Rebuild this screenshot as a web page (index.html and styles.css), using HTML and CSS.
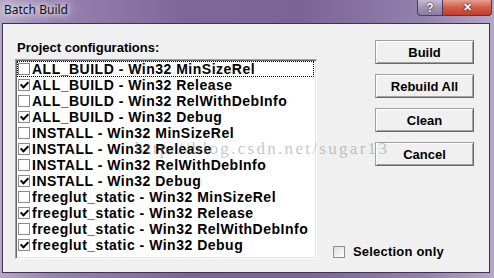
FILE: index.html
```html
<!DOCTYPE html>
<html lang="en">
<head>
    <meta charset="UTF-8">
    <title>Batch Build</title>
    <link rel="stylesheet" href="styles.css">
</head>
<body>
    <div class="window">
        <div class="titlebar">
            <span class="title">Batch Build</span>
            <div class="caps">
                <span class="cap help">?</span>
                <span class="cap close">&#x2715;</span>
            </div>
        </div>

        <div class="client">
            <div class="configs">
                <div class="label">Project configurations:</div>
                <ul class="list">
                    <li class="item focus"><span class="check"></span>ALL_BUILD - Win32 MinSizeRel</li>
                    <li class="item"><span class="check on"></span>ALL_BUILD - Win32 Release</li>
                    <li class="item"><span class="check"></span>ALL_BUILD - Win32 RelWithDebInfo</li>
                    <li class="item"><span class="check on"></span>ALL_BUILD - Win32 Debug</li>
                    <li class="item"><span class="check"></span>INSTALL - Win32 MinSizeRel</li>
                    <li class="item"><span class="check on"></span>INSTALL - Win32 Release</li>
                    <li class="item"><span class="check"></span>INSTALL - Win32 RelWithDebInfo</li>
                    <li class="item"><span class="check on"></span>INSTALL - Win32 Debug</li>
                    <li class="item"><span class="check"></span>freeglut_static - Win32 MinSizeRel</li>
                    <li class="item"><span class="check on"></span>freeglut_static - Win32 Release</li>
                    <li class="item"><span class="check"></span>freeglut_static - Win32 RelWithDebInfo</li>
                    <li class="item"><span class="check on"></span>freeglut_static - Win32 Debug</li>
                </ul>
            </div>

            <div class="actions">
                <button class="btn">Build</button>
                <button class="btn">Rebuild All</button>
                <button class="btn">Clean</button>
                <button class="btn">Cancel</button>
                <label class="option"><span class="box"></span>Selection only</label>
            </div>
        </div>

        <div class="watermark">http://blog.csdn.net/sugar13</div>
    </div>
</body>
</html>
```

FILE: styles.css
```css
body { margin: 0; background: #fff; }
.window { position: relative; width: 494px; height: 278px; display: flex; flex-direction: column; overflow: hidden; font-family: "Liberation Sans", Arial, sans-serif; background: linear-gradient(90deg, #b4a7c7 0%, #9983b2 10%, #7f6699 38%, #7d6497 62%, #9282ad 86%, #b3a8c8 100%); }

/* title bar */
.titlebar { height: 23px; display: flex; justify-content: space-between; align-items: flex-start; }
.title { margin-left: 4px; font-family: "Noto Sans", sans-serif; font-size: 12px; line-height: 19px; color: #111; text-shadow: 0 0 6px #fff, 0 0 10px rgba(255,255,255,.9), 0 0 16px rgba(255,255,255,.7); }
.caps { display: flex; margin-right: 2px; }
.cap { height: 16px; box-sizing: border-box; display: flex; align-items: center; justify-content: center; border: 1px solid #4b3c5e; border-top: none; color: #fff; font-weight: bold; font-size: 12px; text-shadow: 0 0 2px #2a1e36, 0 0 1px #2a1e36; }
.help { width: 26px; border-radius: 0 0 0 4px; background: linear-gradient(#c6bdd3, #a094b4 50%, #8a7e9f); }
.close { width: 49px; border-left: none; border-radius: 0 0 4px 0; font-size: 11px; background: linear-gradient(#e6a092, #d35c47 50%, #c03d2a); }

/* client area */
.client { flex: 1; margin: 0 4px 5px 2px; border: 1px solid #3f3450; background: #f0f0f0; display: flex; gap: 16px; padding: 16px 15px 0 12px; }
.configs { width: 302px; }
.label { margin: 0 0 3px 2px; font-size: 13px; font-weight: bold; line-height: 16px; }
.list { list-style: none; margin: 0; padding: 1px; height: 200px; box-sizing: border-box; background: #fff; border: 1px solid; border-color: #a0a0a0 #fff #fff #a0a0a0; box-shadow: inset 1px 1px 0 #696969, inset -1px -1px 0 #e3e3e3; }
.item { height: 16px; line-height: 16px; font-size: 14px; font-weight: bold; letter-spacing: .5px; display: flex; align-items: center; white-space: nowrap; }
.item.focus { outline: 1px dotted #000; outline-offset: -1px; margin-right: 1px; }
.check { position: relative; flex: none; width: 12px; height: 12px; box-sizing: border-box; margin: 0 2px 0 1px; border: 1px solid #8a8a8a; background: #fff; }
.check.on::after { content: ""; position: absolute; left: 3px; top: 0; width: 3px; height: 6px; border: solid #000; border-width: 0 2px 2px 0; transform: rotate(45deg); }

/* buttons */
.actions { width: 141px; display: flex; flex-direction: column; align-items: flex-end; }
.btn { width: 99px; height: 24px; margin-bottom: 10px; padding: 0; font-family: "Liberation Sans", Arial, sans-serif; font-size: 13px; font-weight: bold; color: #000; background: #f0f0f0; border: 1px solid; border-color: #a0a0a0 #696969 #696969 #a0a0a0; box-shadow: inset 1px 1px 0 #fff, inset -1px -1px 0 #a0a0a0; }
.option { margin-top: auto; margin-bottom: 12px; align-self: flex-start; display: flex; align-items: center; gap: 8px; font-size: 13px; font-weight: bold; line-height: 16px; letter-spacing: .2px; }
.box { width: 12px; height: 12px; box-sizing: border-box; border: 1px solid #8e8f8f; background: linear-gradient(135deg, #dcdcdc, #fff); }

.watermark { position: absolute; left: 135px; top: 140px; font-family: "Liberation Serif", serif; font-size: 17px; line-height: 17px; letter-spacing: 2.3px; color: rgba(140,140,140,.5); pointer-events: none; }
```
